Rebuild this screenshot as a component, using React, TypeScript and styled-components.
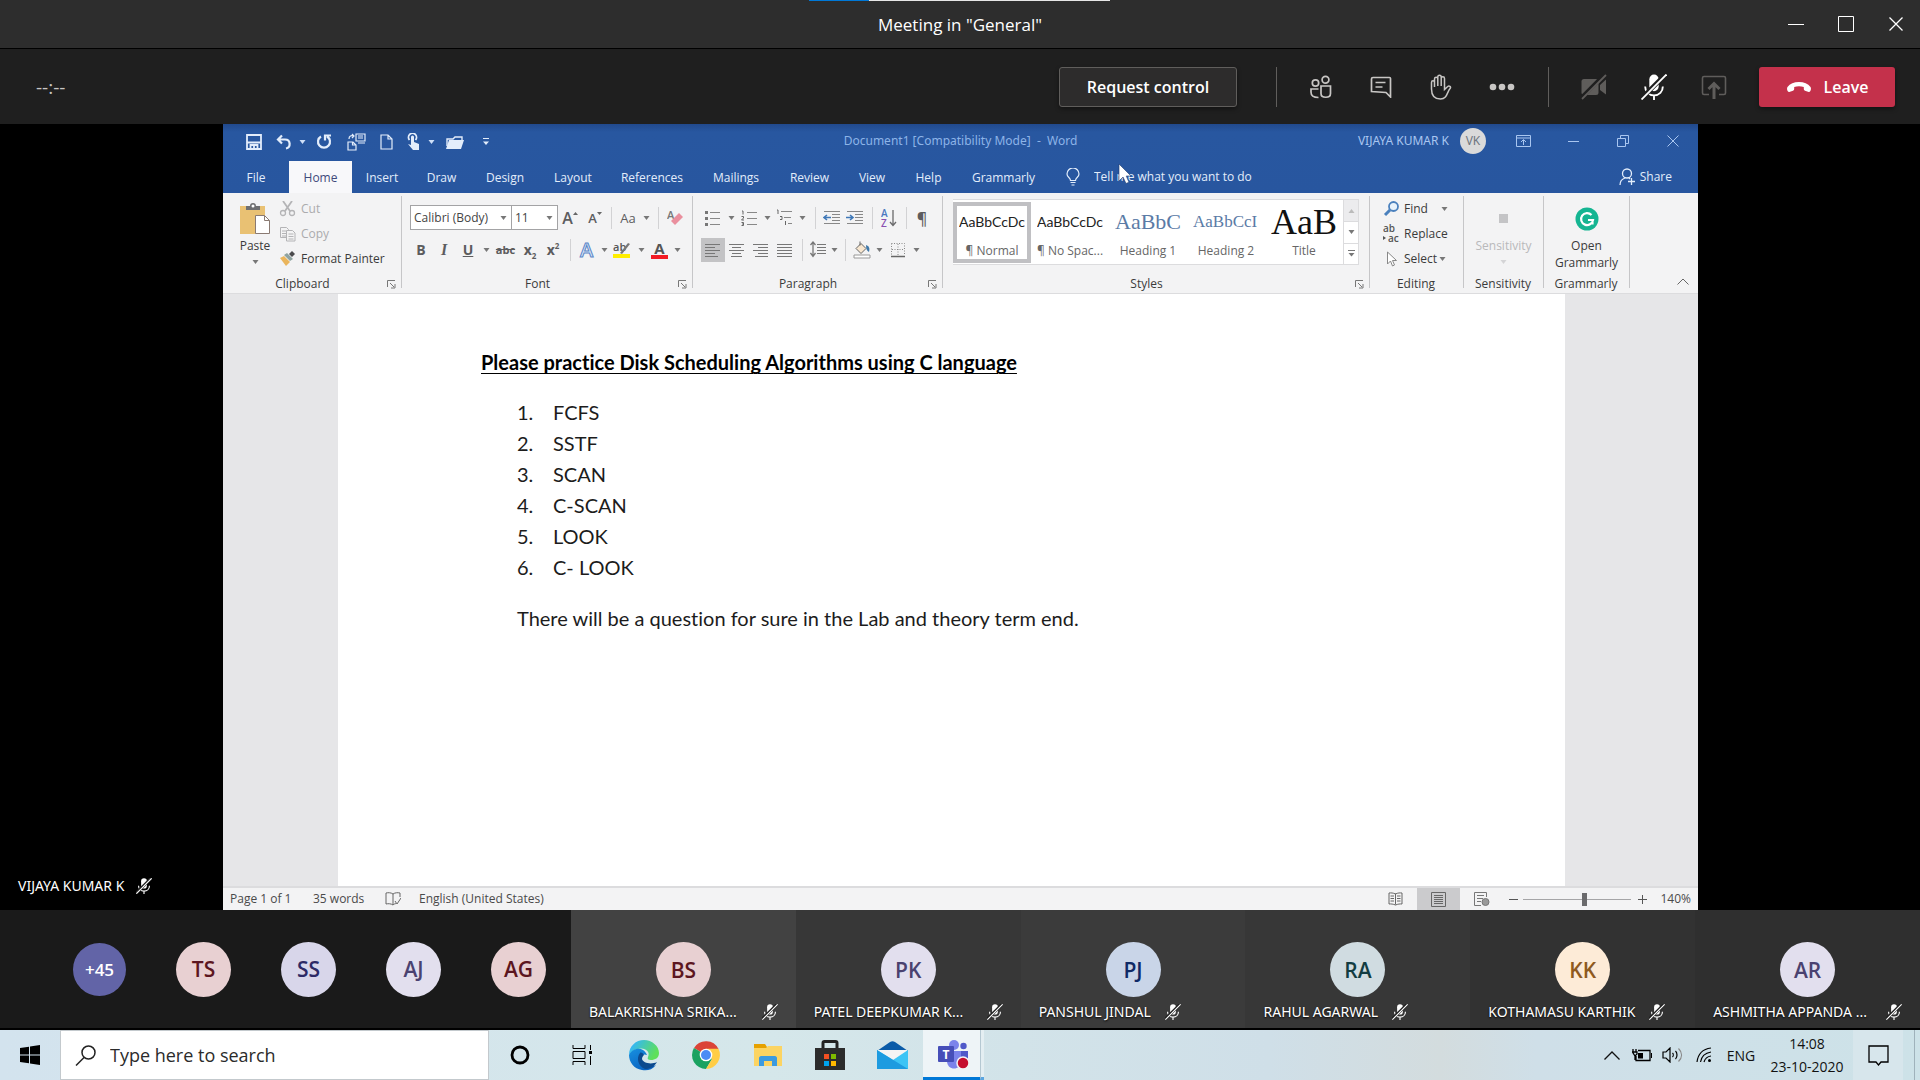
import React from "react";
import styled, { createGlobalStyle, css } from "styled-components";

const ui = `"Open Sans", "Noto Sans", sans-serif`;
const wideUi = `"Noto Sans", "Open Sans", sans-serif`;
const calibri = `Lato, "Open Sans", sans-serif`;
const cambria = `"Liberation Serif", serif`;

const GlobalStyle = createGlobalStyle`
  * { box-sizing: border-box; }
  body { margin: 0; background: #000; font-family: ${ui}; }
  button, input, select { font: inherit; color: inherit; margin: 0; padding: 0; border: 0; background: none; }
  svg { display: block; flex: none; }
`;

const Screen = styled.div`
  display: flex;
  flex-direction: column;
  min-height: 100vh;
`;

/* ---------- meeting window ---------- */

const TitleBar = styled.header`
  display: grid;
  grid-template-columns: 1fr auto 1fr;
  align-items: center;
  height: 49px;
  padding-top: 2px;
  background: #2d2d2d;
  border-bottom: 1px solid #000;
  color: #fff;
  position: relative;
`;

const ShareStrip = styled.div`
  position: absolute;
  top: 0;
  left: 50%;
  width: 301px;
  height: 1px;
  margin-left: -151px;
  background: linear-gradient(to right, #0078d7 60px, #e6e6e6 60px);
`;

const WindowTitle = styled.h1`
  grid-column: 2;
  margin: 0;
  font-size: 17px;
  line-height: 24px;
  font-weight: 400;
`;

const WindowButtons = styled.div`
  display: flex;
  justify-content: flex-end;
  gap: 26px;
  padding: 0 12px 2px 0;
`;

const PlainButton = styled.button<{ $w?: number }>`
  display: flex;
  align-items: center;
  justify-content: center;
  width: ${(p) => p.$w ?? 24}px;
  height: 24px;
`;

const MeetingBar = styled.div`
  display: flex;
  align-items: center;
  height: 75px;
  padding: 0 25px 0 36px;
  background: #1f1f1f;
  color: #c8c6c4;
`;

const Timer = styled.span`
  font-size: 19px;
  line-height: 20px;
  margin-right: auto;
`;

const RequestButton = styled.button`
  width: 178px;
  height: 40px;
  border: 1px solid #605e5c;
  border-radius: 3px;
  background: #2d2c2c;
  color: #fff;
  font-size: 16px;
  font-weight: 600;
  box-shadow: 0 2px 4px rgba(0, 0, 0, 0.4);
`;

const BarGroup = styled.div<{ $gap: number }>`
  display: flex;
  align-items: center;
  height: 40px;
  gap: ${(p) => p.$gap}px;
`;

const BarDivider = styled.div<{ $left: number; $right: number }>`
  width: 1px;
  height: 40px;
  margin: 0 ${(p) => p.$right}px 0 ${(p) => p.$left}px;
  background: #605e5c;
`;

const LeaveButton = styled.button`
  display: flex;
  align-items: center;
  justify-content: center;
  gap: 12px;
  width: 136px;
  height: 40px;
  margin-left: 32px;
  border-radius: 3px;
  background: #c4314b;
  color: #fff;
  font-size: 16px;
  font-weight: 600;
  box-shadow: 0 2px 4px rgba(0, 0, 0, 0.4);
`;

const Stage = styled.main`
  flex: 1;
  display: grid;
  grid-template-columns: 223px minmax(0, 1fr) 222px;
  background: #000;
`;

const Presenter = styled.div`
  align-self: end;
  display: flex;
  align-items: center;
  gap: 12px;
  padding: 0 0 14px 18px;
  color: #fff;
  font-family: ${wideUi};
  font-size: 14px;
  line-height: 20px;
  white-space: nowrap;
`;

/* ---------- shared Word window ---------- */

const Word = styled.section`
  display: flex;
  flex-direction: column;
  min-width: 0;
  background: #e6e6e8;
  position: relative;
`;

const WordTop = styled.div`
  background: linear-gradient(#21498c, #2857a0 8px, #28569f);
  color: #e3edfb;
`;

const WordTitleRow = styled.div`
  display: grid;
  grid-template-columns: 1fr auto 1fr;
  align-items: center;
  height: 36px;
`;

const QuickAccess = styled.div`
  display: flex;
  align-items: center;
  padding-left: 15px;
`;

const DocTitle = styled.span`
  font-family: ${wideUi};
  font-size: 12px;
  line-height: 16px;
  padding-bottom: 2px;
  color: #8db4e8;
  white-space: pre;
`;

const Account = styled.div`
  display: flex;
  align-items: center;
  justify-content: flex-end;
  padding: 0 13px 2px 0;
  font-family: ${wideUi};
  font-size: 12px;
  line-height: 16px;
  color: #a9c6f0;
`;

const AccountBadge = styled.span`
  display: flex;
  align-items: center;
  justify-content: center;
  width: 26px;
  height: 26px;
  margin: 0 25px 0 11px;
  border-radius: 50%;
  background: #dadada;
  color: #6f7680;
  font-size: 12px;
`;

const AccountButtons = styled.div`
  display: flex;
  gap: 26px;
`;

const TabRow = styled.nav`
  display: flex;
  align-items: center;
  height: 33px;
  padding-right: 26px;
  font-size: 12px;
`;

const Tab = styled.button<{ $w: number; $active?: boolean }>`
  width: ${(p) => p.$w}px;
  height: 32px;
  margin-top: 1px;
  text-align: center;
  ${(p) => p.$active && css`
    background: #f8f8fa;
    color: #3f4a7a;
  `}
`;

const TellMe = styled.label`
  display: flex;
  align-items: center;
  gap: 14px;
  flex: 1;
  margin-left: 16px;
`;

const TellMeInput = styled.input`
  width: 190px;
  font-size: 12px;
  outline: 0;
  &::placeholder { color: #e3edfb; opacity: 1; }
`;

const ShareButton = styled.button`
  display: flex;
  align-items: center;
  gap: 4px;
`;

const Ribbon = styled.div`
  display: flex;
  height: 101px;
  padding-top: 3px;
  background: #f3f3f4;
  border-bottom: 1px solid #dcdcde;
  color: #3b3b3b;
  font-size: 12px;
  line-height: 16px;
`;

const Group = styled.section<{ $w?: number }>`
  display: flex;
  flex-direction: column;
  justify-content: space-between;
  ${(p) => (p.$w ? css`flex: 0 0 ${p.$w}px;` : css`flex: 1; min-width: 0;`)}
  background: linear-gradient(#c6c6c8, #c6c6c8) right top / 1px 92px no-repeat;
`;

const GroupBody = styled.div`
  display: flex;
  height: 76px;
`;

const GroupFooter = styled.div`
  display: flex;
  align-items: center;
  height: 18px;
  padding-right: 2px;
  text-align: center;
`;

const GroupName = styled.span`
  flex: 1;
`;

const LauncherButton = styled.button`
  width: 18px;
  padding-left: 5px;
`;

const BigButton = styled.button<{ $w: number; $left?: number; $dim?: boolean }>`
  display: flex;
  flex-direction: column;
  align-items: center;
  width: ${(p) => p.$w}px;
  padding: 5px 0 0 ${(p) => p.$left ?? 0}px;
  line-height: 17px;
  color: ${(p) => (p.$dim ? "#b9b9bb" : "inherit")};
`;

const BigIcon = styled.span`
  display: flex;
  align-items: center;
  justify-content: center;
  height: 36px;
`;

const BigCaret = styled.span`
  padding-top: 6px;
`;

const CommandList = styled.div`
  display: flex;
  flex-direction: column;
  align-items: flex-start;
`;

const Command = styled.button<{ $dim?: boolean }>`
  display: flex;
  align-items: center;
  gap: 5px;
  height: 25px;
  color: ${(p) => (p.$dim ? "#ababad" : "inherit")};
  white-space: nowrap;
`;

const ToolRows = styled.div`
  display: flex;
  flex-direction: column;
  gap: 5px;
  padding: 8px 0 0 8px;
`;

const ToolRow = styled.div`
  display: flex;
  align-items: center;
  height: 27px;
`;

const Tool = styled.button<{ $w: number; $on?: boolean }>`
  display: flex;
  align-items: center;
  justify-content: center;
  width: ${(p) => p.$w}px;
  height: 24px;
  color: #5c5c5e;
  font-size: 13px;
  background: ${(p) => (p.$on ? "#c3c3c5" : "none")};
`;

const Sep = styled.div<{ $w: number }>`
  width: ${(p) => p.$w}px;
  height: 22px;
  background: linear-gradient(#d2d2d4, #d2d2d4) center / 1px 100% no-repeat;
`;

const Bold = styled.b`font-size: 14px;`;
const Italic = styled.i`font-family: "Liberation Serif", serif; font-size: 16px; font-weight: 700;`;
const Underline = styled.u`font-size: 14px; font-weight: 700;`;
const Strike = styled.s`font-size: 11px; font-weight: 700;`;
const Script = styled.span`
  font-weight: 700;
  font-size: 14px;
  line-height: 16px;
  sub, sup { font-size: 8px; line-height: 0; }
`;
const Grow = styled.span<{ $s: number }>`
  font-size: ${(p) => p.$s}px;
  font-weight: 600;
  line-height: 20px;
`;

const Picker = styled.label<{ $w: number }>`
  display: grid;
  align-items: center;
  width: ${(p) => p.$w}px;
  height: 25px;
  margin-right: -1px;
  border: 1px solid #a3a3a5;
  background: #fff;
  > * { grid-area: 1 / 1; }
  > svg { justify-self: end; margin-right: 4px; pointer-events: none; }
`;

const PickerSelect = styled.select`
  appearance: none;
  width: 100%;
  height: 23px;
  padding-left: 3px;
  font-size: 12px;
  color: #444;
`;

const Gallery = styled.div`
  display: flex;
  flex: 1;
  min-width: 0;
  height: 66px;
  margin: 3px 11px 0 10px;
  border: solid #dcdcde;
  border-width: 1px 0;
  background: #fff;
`;

const StyleCard = styled.button<{ $on?: boolean }>`
  display: flex;
  flex-direction: column;
  align-items: center;
  justify-content: flex-end;
  flex: 1 1 0;
  min-width: 0;
  height: 61px;
  margin-top: 2px;
  padding: 0 2px;
  border: 4px solid ${(p) => (p.$on ? "#c0c0c3" : "transparent")};
  color: #666;
`;

const Sample = styled.span<{ $size: number; $color: string; $serif: boolean }>`
  display: block;
  width: 100%;
  height: 37px;
  overflow: hidden;
  font-family: ${(p) => (p.$serif ? cambria : calibri)};
  font-size: ${(p) => p.$size}px;
  line-height: 32px;
  text-align: left;
  color: ${(p) => p.$color};
  white-space: nowrap;
`;

const StyleLabel = styled.span`
  line-height: 16px;
  white-space: nowrap;
`;

const GalleryScroll = styled.div`
  display: grid;
  grid-template-rows: 1fr 1fr 1fr;
  flex: none;
  width: 16px;
  border: 1px solid #dcdcde;
  border-width: 0 1px;
  button { display: grid; place-items: center; }
  button + button { border-top: 1px solid #dcdcde; }
  button:first-child { background: #ececee; }
`;

const CollapseCell = styled.div`
  display: flex;
  align-items: flex-end;
  justify-content: flex-end;
  width: 68px;
  padding-right: 3px;
`;

const Canvas = styled.div`
  flex: 1;
  padding: 0 133px 0 115px;
`;

const Page = styled.article`
  height: 100%;
  padding: 53px 143px 0;
  background: #fff;
  color: #1c1c1c;
  font-family: ${calibri};
  font-size: 20px;
  line-height: 31px;
  font-variant-ligatures: none;
`;

const DocHeading = styled.h2`
  margin: 0 0 19px;
  font-size: 20px;
  line-height: 31px;
  font-weight: 700;
  text-decoration: underline;
  text-decoration-thickness: 1px;
  text-underline-offset: 3px;
  color: #000;
`;

const DocList = styled.ol`
  margin: 0 0 20px;
  padding: 0 0 0 36px;
  list-style: none;
`;

const DocItem = styled.li`
  display: grid;
  grid-template-columns: 36px 1fr;
`;

const DocText = styled.p`
  margin: 0 0 0 36px;
`;

const StatusBar = styled.footer`
  display: flex;
  align-items: center;
  height: 24px;
  padding: 0 7px;
  border-top: 2px solid #dcdcde;
  background: #f3f3f4;
  color: #4a4a4a;
  font-size: 12px;
  line-height: 16px;
`;

const StatusText = styled.span<{ $w: number }>`
  width: ${(p) => p.$w}px;
  white-space: nowrap;
`;

const StatusSpacer = styled.div`flex: 1;`;

const ViewButton = styled.button<{ $on?: boolean }>`
  display: grid;
  place-items: center;
  width: 43px;
  height: 22px;
  background: ${(p) => (p.$on ? "#cbcbcd" : "none")};
`;

const ZoomSlider = styled.input`
  appearance: none;
  width: 108px;
  height: 14px;
  background: linear-gradient(#a5a5a7, #a5a5a7) center / 100% 1px no-repeat;
  &::-webkit-slider-thumb {
    appearance: none;
    width: 5px;
    height: 13px;
    background: #6a6a6c;
  }
`;

const ZoomValue = styled.span`
  margin-left: 7px;
`;

const Pointer = styled.svg`
  position: absolute;
  left: 895px;
  top: 39px;
`;

/* ---------- participants ---------- */

const Strip = styled.section`
  display: grid;
  grid-template-columns: 571px repeat(6, minmax(0, 1fr));
  height: 120px;
  border-bottom: 2px solid #000;
  background: #1a1a1a;
`;

const Overflow = styled.div`
  display: flex;
  align-items: center;
  gap: 50px;
  padding-left: 73px;
`;

const Avatar = styled.span<{ $bg: string; $fg: string; $small?: boolean }>`
  display: flex;
  align-items: center;
  justify-content: center;
  width: ${(p) => (p.$small ? 53 : 55)}px;
  height: ${(p) => (p.$small ? 53 : 55)}px;
  border-radius: 50%;
  background: ${(p) => p.$bg};
  color: ${(p) => p.$fg};
  font-size: ${(p) => (p.$small ? 17 : 21)}px;
  font-weight: 600;
`;

const Tile = styled.div<{ $bg: string }>`
  display: flex;
  flex-direction: column;
  align-items: center;
  padding: 32px 18px 0;
  background: ${(p) => p.$bg};
`;

const TileName = styled.div<{ $long?: boolean }>`
  display: flex;
  align-items: center;
  justify-content: ${(p) => (p.$long ? "space-between" : "flex-start")};
  gap: 14px;
  width: 100%;
  margin-top: 5px;
  color: #fff;
  font-family: ${wideUi};
  font-size: 14px;
  line-height: 20px;
  white-space: nowrap;
  text-shadow: 0 1px 2px #000;
`;

/* ---------- taskbar ---------- */

const Taskbar = styled.footer`
  display: flex;
  align-items: stretch;
  height: 50px;
  background: linear-gradient(to right, #d3e3ee, #d5e7ea 40%, #cfdfe8 66%, #d3dcde 75%, #cfdfe8 80%, #cde2e8);
  color: #111;
`;

const StartButton = styled.button`
  display: grid;
  place-items: center;
  width: 60px;
`;

const SearchBox = styled.label`
  display: flex;
  align-items: center;
  gap: 14px;
  width: 429px;
  padding-left: 14px;
  border: 1px solid #c3c9cd;
  background: #fff;
`;

const SearchInput = styled.input`
  flex: 1;
  font-size: 18px;
  outline: 0;
  &::placeholder { color: #2b2b2b; opacity: 1; }
`;

const TaskButton = styled.button<{ $on?: boolean }>`
  display: grid;
  place-items: center;
  width: ${(p) => (p.$on ? 57 : 62)}px;
  ${(p) => p.$on && css`
    background: #eef4f7;
    border-bottom: 3px solid #0078d7;
    padding: 3px 0 0 4px;
  `}
`;

const StackEdge = styled.div`
  width: 4px;
  border-left: 1px solid #b5c8d2;
  border-bottom: 3px solid #5ba5e0;
  background: #e4eef2;
`;

const Tray = styled.div`
  display: flex;
  align-items: center;
  margin-left: auto;
  font-size: 14px;
`;

const TrayButton = styled.button<{ $w: number }>`
  display: grid;
  place-items: center;
  width: ${(p) => p.$w}px;
  height: 50px;
`;

const Clock = styled.time`
  display: flex;
  flex-direction: column;
  align-items: center;
  width: 92px;
  line-height: 23px;
`;

const NoticeButton = styled.button`
  display: grid;
  place-items: center;
  width: 50px;
  height: 50px;
  background: #d7e6ec;
`;

const ShowDesktop = styled.button`
  width: 6px;
  height: 50px;
  margin-left: 11px;
  border-left: 1px solid #9fb2bb;
`;

/* ---------- drawings ---------- */

type IconProps = { w: number; h: number; box?: string; color?: string; sw?: number; fill?: string; children: React.ReactNode };

const Icon = ({ w, h, box, color = "currentColor", sw = 1, fill = "none", children }: IconProps) => (
  <svg width={w} height={h} viewBox={box ?? `0 0 ${w} ${h}`} fill={fill} stroke={color} strokeWidth={sw} aria-hidden="true">
    {children}
  </svg>
);

const Caret = ({ color = "#777" }: { color?: string }) => (
  <Icon w={7} h={4} color="none" fill={color}><path d="M0.5 0h6L3.5 4z" /></Icon>
);

const MutedMic = ({ s = 16, color = "#fff" }: { s?: number; color?: string }) => (
  <Icon w={s} h={s} box="0 0 25 25" color={color} sw={1.8}>
    <path d="M12.500 0.500a4.500 4.500 0 0 1 4.500 4.500v7a4.500 4.500 0 0 1-9 0V5a4.500 4.500 0 0 1 4.500-4.500z" fill={color} stroke="none" />
    <path d="M4 12c0 5 3.500 8.500 8.500 8.500S21 17 21 12M12.500 20.500V25" />
    <path d="M24 0 0 24" stroke="#1f1f1f" strokeWidth="4.500" />
    <path d="M24.500 0.500 0.500 24.500" />
  </Icon>
);

const Launcher = () => (
  <Icon w={9} h={9} color="#777"><path d="M0.500 7V0.500H8M3 3l4 4M8 4v4H4" /></Icon>
);

const lines = (rows: [number, number, number][]) => (
  <Icon w={16} h={16} color="#777">
    {rows.map(([x1, x2, y]) => <path key={y} d={`M${x1} ${y + 0.5}H${x2}`} />)}
  </Icon>
);

const alignLeft = lines([[0, 15, 2], [0, 10, 5], [0, 15, 8], [0, 10, 11], [0, 13, 14]]);
const alignCenter = lines([[0, 15, 2], [3, 12, 5], [0, 15, 8], [3, 12, 11], [2, 13, 14]]);
const alignRight = lines([[0, 15, 2], [5, 15, 5], [0, 15, 8], [5, 15, 11], [2, 15, 14]]);
const justify = lines([[0, 15, 2], [0, 15, 5], [0, 15, 8], [0, 15, 11], [0, 15, 14]]);

const Bullets = () => (
  <Icon w={16} h={16} color="#888">
    <path d="M5 2.500h10M5 8.500h10M5 14.500h10" />
    <path d="M0 2.500h3M0 8.500h3M0 14.500h3" strokeWidth="3" stroke="#777" />
  </Icon>
);
const Numbers = () => (
  <Icon w={16} h={16} color="#888">
    <path d="M6 2.500h10M6 8.500h10M6 14.500h10" />
    <path d="M1 1h1v3.500M0.500 6.500h2v1.500l-2 2h2.500M0.500 12.500h2v3h-2M1 14h1" stroke="#666" />
  </Icon>
);
const Multilevel = () => (
  <Icon w={18} h={17} color="#888">
    <path d="M5 2.500h11M8 8.500h7M12 14.500h4" />
    <path d="M1 1h1v4M4 7.500h2v3h-2M9.500 12v4" stroke="#666" />
  </Icon>
);
const Indent = ({ right }: { right?: boolean }) => (
  <Icon w={18} h={16} color="#888">
    <path d="M1 1.500h16M9 4.500h8M9 7.500h8M9 10.500h8M1 13.500h16" />
    <path d={right ? "M0 7.500h6M4 5l3 2.500L4 10" : "M8 7.500H2M4 5 1 7.500 4 10"} stroke="#3f78b8" strokeWidth="1.600" />
  </Icon>
);
const SortIcon = () => (
  <Icon w={16} h={20} color="#6a6a6c">
    <text x="0" y="9" fontSize="10" fontWeight="600" fill="#4a78c0" stroke="none">A</text>
    <text x="0" y="19" fontSize="10" fontWeight="600" fill="#8a4fb0" stroke="none">Z</text>
    <path d="M12 2v15M9 14l3 3.500 3-3.500" strokeWidth="1.300" />
  </Icon>
);
const Spacing = () => (
  <Icon w={17} h={17} color="#777">
    <path d="M7 3.500h9M7 6.500h9M7 9.500h9M7 12.500h9" />
    <path d="M3 1v14M0.500 4 3 1l2.500 3M0.500 12 3 15.500 5.500 12" strokeWidth="1.300" />
  </Icon>
);
const Bucket = () => (
  <Icon w={18} h={18} color="#666">
    <path d="M3 7.500 8 2.500l5 5-5 5zM7 0.500v4" fill="#f7e6cf" />
    <path d="M13 4c3 1 4 3 3 7-2-1-3-3-3-7z" fill="#3f78a8" stroke="none" />
    <path d="M1 14h16v3H1z" fill="#fff" stroke="#999" />
  </Icon>
);
const Borders = () => (
  <Icon w={16} h={16} color="#888">
    <path d="M1.500 1.500h13v12M1.500 1.500v12M8 2v11M2 7.500h12" strokeDasharray="1 1.500" />
    <path d="M1 14.500h14" strokeWidth="1.500" stroke="#666" />
  </Icon>
);

const Paste = () => (
  <Icon w={32} h={34} color="none">
    <path d="M1 4h25v28H1z" fill="#e9c173" />
    <path d="M7 8V4h4a3 3 0 0 1 6 0h4v4z" fill="#6e6e70" />
    <circle cx="14" cy="4" r="1.500" fill="#fff" />
    <path d="M16.500 13.500h9l5 5v13h-14z" fill="#fff" stroke="#8a7a72" />
    <path d="M25.500 13.500v5h5" stroke="#8a7a72" />
  </Icon>
);
const Cut = () => (
  <Icon w={17} h={16} color="#b4b4b6" sw={1.8}>
    <path d="M4 0l7 10M13 0 6 10" /><circle cx="4" cy="12" r="2.500" strokeWidth="1.300" /><circle cx="13" cy="12" r="2.500" strokeWidth="1.300" />
  </Icon>
);
const Copy = () => (
  <Icon w={17} h={16} color="#b4b4b6">
    <path d="M1.500 1.500h6l2 2v8h-8zM3 5h4M3 7.500h4M3 10h4" />
    <path d="M7.500 4.500h6l2.500 2.500v8H7.500zM9.500 8h5M9.500 10.500h5M9.500 13h5" fill="#f3f3f4" />
  </Icon>
);
const Painter = () => (
  <Icon w={17} h={16} color="none">
    <path d="M1 7l4-2 6 6-4 4z" fill="#eab55c" /><path d="M5 4l3-2 6 6-3 2z" fill="#8fa3a0" /><path d="M10 3l3-3 3 3-3 3z" fill="#4b4b4d" />
  </Icon>
);

const SaveIcon = () => (
  <Icon w={16} h={16} sw={1.8}><path d="M1 1h14v14H1zM1.500 8.500h13M4.500 15v-4h7v4M8 11v4" /></Icon>
);
const Undo = () => <Icon w={16} h={16} sw={2.2}><path d="M6 1.500 2 5.500l4 4M2 5.500h7c6 0 6 8 1 9" /></Icon>;
const Redo = () => <Icon w={16} h={16} sw={2.2}><path d="M5 2.500a6 6 0 1 0 6 0M9 6.500V1.500h6" /></Icon>;
const PageSwap = () => (
  <Icon w={19} h={18} sw={1.2}><path d="M1 9h5l3 3v5H1zM5.500 9v3H9M9 1h9v7H9zM11 3h5M11 5h5M2 6c0-3 2-4 5-3M5 1l2 2-2 2M11 10h7" /></Icon>
);
const NewPage = () => <Icon w={13} h={16} sw={1.2}><path d="M1 1h7l4 4v10H1zM8 1v4h4" /></Icon>;
const Touch = () => (
  <Icon w={14} h={18} color="none" fill="currentColor">
    <path d="M4 4a1.500 1.500 0 0 1 3 0v5l5 2v6H6L1 11l3 1z" /><path d="M2.500 7a4 4 0 1 1 6 0" fill="none" stroke="currentColor" strokeWidth="1.800" />
  </Icon>
);
const Folder = () => (
  <Icon w={19} h={15} color="none" fill="currentColor"><path d="M3 5h15l-3 9H0z" /><path d="M1 11V4h6l2-2h7v3" fill="none" stroke="currentColor" strokeWidth="1.400" /></Icon>
);
const Customize = () => <Icon w={8} h={8}><path d="M1 0.500h6" /><path d="M1 3.500h6L4 7z" fill="currentColor" stroke="none" /></Icon>;

const People = () => (
  <Icon w={22} h={24} sw={1.7}>
    <circle cx="5.500" cy="8" r="3.200" /><circle cx="15.500" cy="4.800" r="3.400" />
    <path d="M11 11h9.500v7.500c0 5-9.500 5-9.500 0zM8.500 14H1v3c0 4 2 5.500 7.500 5.500" />
  </Icon>
);
const Chat = () => (
  <Icon w={22} h={22} sw={1.7}><path d="M3 1.500h16.500c.6 0 1 .4 1 1V21l-4.500-4.500L1.500 15.500V3c0-.8.700-1.500 1.500-1.500zM5.500 6.500h10M5.500 11h7" /></Icon>
);
const Hand = () => (
  <Icon w={22} h={26} sw={1.5}>
    <path d="M1.500 15V8.500c0-2.200 3-2.200 3 0V5c0-2.300 3.300-2.300 3.300 0V3c0-2.300 3.400-2.300 3.400 0v1.500c0-2.300 3.300-2.300 3.300 0V15.500l3.200-3c1.500-1 3.600.3 2.600 1.800C17 17.500 17.500 25 10.500 25S1.500 20 1.500 15zM4.500 8.500V13M7.800 4.500V12M11.200 4V12" />
  </Icon>
);
const CamOff = () => (
  <Icon w={26} h={26} color="#5f5d5b" sw={1.8}>
    <path d="M3 5h12a2.500 2.500 0 0 1 2.500 2.500v11A2.500 2.500 0 0 1 15 21H3a2.500 2.500 0 0 1-2.500-2.500v-11A2.500 2.500 0 0 1 3 5zM19 11l6-5.500v15L19 16z" fill="#5f5d5b" stroke="none" />
    <path d="M24 0 0 24" stroke="#1f1f1f" strokeWidth="4" /><path d="M25 1 1 25" />
  </Icon>
);
const ShareTray = () => (
  <Icon w={26} h={24} color="#5f5d5b" sw={1.6}><path d="M8 19.500H3c-1 0-1.500-.5-1.500-1.500V3c0-1 .5-1.500 1.500-1.500h20c1 0 1.500.500 1.500 1.500v15c0 1-.5 1.500-1.500 1.500h-5" /><path d="M13 24V9M7.500 14 13 8.500l5.500 5.500" strokeWidth="3" /></Icon>
);
const Phone = () => (
  <Icon w={26} h={12} color="none" fill="#fff"><path d="M13 1c5 0 9 1.500 11.500 5 .8 1.200.5 3.500-.5 4.500-.5.5-1 .5-2 .2l-3-1c-1-.4-1.200-1-1.200-2.200V6c-3-1-6.600-1-9.600 0v1.500c0 1.200-.2 1.800-1.200 2.200l-3 1c-1 .3-1.500.3-2-.2-1-1-1.300-3.300-.5-4.500C4 2.500 8 1 13 1z" /></Icon>
);

const Edge = () => (
  <Icon w={32} h={32} color="none">
    <defs>
      <linearGradient id="edgeTop" x1="0" y1="0" x2="1" y2="0.400"><stop offset="0.200" stopColor="#35b8f1" /><stop offset="1" stopColor="#5fe05a" /></linearGradient>
      <linearGradient id="edgeBody" x1="0" y1="0" x2="0.600" y2="1"><stop offset="0" stopColor="#1790e0" /><stop offset="1" stopColor="#0a62c0" /></linearGradient>
    </defs>
    <path d="M1 16C1 7 8 1 16 1s15 6 15 13c0 5-4 7-8 7-3 0-4-1-3-3 3-6-4-10-10-8-5 1-8 4-9 6z" fill="url(#edgeTop)" />
    <path d="M1 16c2-5 9-8 14-5 2 1 3 3 4 5-5-2-8 2-7 6 2 5 9 7 16 4-4 5-9 6-14 5C6 30 1 23 1 16z" fill="url(#edgeBody)" />
    <path d="M12 14c-4 5-2 13 5 16 5 0 9-2 12-7-6 3-14 1-15-3 0-2 1-3 2-4-1-2-3-3-4-2z" fill="#0c4a8e" />
  </Icon>
);
const Chrome = () => (
  <Icon w={28} h={28} color="none">
    <path d="M14 14 2 7a14 14 0 0 1 24.500 1z" fill="#db4437" />
    <path d="M14 14 1.900 7A14 14 0 0 0 14 28l6-10z" fill="#1aa260" />
    <path d="M14 7.800h12.500A14 14 0 0 1 14 28l6-10z" fill="#ffcd46" />
    <circle cx="14" cy="14" r="6.300" fill="#fff" /><circle cx="14" cy="14" r="5" fill="#4c8bf5" />
  </Icon>
);
const Explorer = () => (
  <Icon w={28} h={24} color="none">
    <path d="M0 1h11l2 3v3H0z" fill="#e6a100" /><path d="M0 5h12l2-2h14v20H0z" fill="#fcd462" /><path d="M5 23V15c0-1 1-2 2-2h14c1 0 2 1 2 2v8h-5v-5h-8v5z" fill="#3c9be0" />
  </Icon>
);
const Store = () => (
  <Icon w={30} h={31} color="none">
    <path d="M8 9V3c0-1 .5-1.500 1.500-1.500h11c1 0 1.500.500 1.500 1.500v6" stroke="#222" strokeWidth="3" /><path d="M0 8h30v22H0z" fill="#2c2c2c" />
    <path d="M9 14h5v5H9z" fill="#f25022" /><path d="M16 14h5v5h-5z" fill="#7fba00" /><path d="M9 21h5v5H9z" fill="#00a4ef" /><path d="M16 21h5v5h-5z" fill="#ffb900" />
  </Icon>
);
const Mail = () => (
  <Icon w={31} h={29} color="none">
    <path d="M0 10 13 1q2.500-1.500 5 0l13 9z" fill="#0a5ba8" /><path d="M1 9h29v12H1z" fill="#f4f4f4" /><path d="M0 9l16 10 15-10v19H0z" fill="#3cc4f5" /><path d="M0 9l31 19H0z" fill="#1d9be0" />
  </Icon>
);
const Teams = () => (
  <Icon w={32} h={32} color="none">
    <circle cx="16" cy="6" r="5" fill="#7b83eb" /><circle cx="25.500" cy="7" r="3.200" fill="#5059c9" />
    <path d="M19 12h11v9c0 6-8 7-11 2z" fill="#5059c9" /><path d="M9 12h14v10c0 10-14 10-14 0z" fill="#7b83eb" />
    <rect x="0" y="7" width="16" height="16" rx="1" fill="#464eb8" />
    <text x="8" y="19.500" fontSize="12" fontWeight="700" textAnchor="middle" fill="#fff">T</text>
    <circle cx="25" cy="24" r="6" fill="#c50f2e" stroke="#f3f3f3" strokeWidth="1.500" />
  </Icon>
);

/* ---------- data ---------- */

const tabs: [string, number][] = [
  ["File", 66], ["Home", 63], ["Insert", 60], ["Draw", 59], ["Design", 68], ["Layout", 68], ["References", 90],
  ["Mailings", 78], ["Review", 69], ["View", 56], ["Help", 57], ["Grammarly", 93],
];

const styleCards: { sample: string; label: string; size: number; color: string; serif: boolean }[] = [
  { sample: "AaBbCcDc", label: "¶ Normal", size: 14, color: "#222", serif: false },
  { sample: "AaBbCcDc", label: "¶ No Spac...", size: 14, color: "#222", serif: false },
  { sample: "AaBbC", label: "Heading 1", size: 22, color: "#5b7ba6", serif: true },
  { sample: "AaBbCcI", label: "Heading 2", size: 17, color: "#5b7ba6", serif: true },
  { sample: "AaB", label: "Title", size: 36, color: "#111", serif: true },
];

const algorithms = ["FCFS", "SSTF", "SCAN", "C-SCAN", "LOOK", "C- LOOK"];

const overflow: [string, string, string][] = [
  ["TS", "#e8d0d2", "#5c1620"], ["SS", "#d8d6ea", "#2d2a66"], ["AJ", "#e2dfee", "#4a4270"], ["AG", "#e8d0d2", "#5c1620"],
];

const participants = [
  { id: "BS", name: "BALAKRISHNA SRIKA...", bg: "#424242", av: "#e8d0d2", fg: "#5c1620", long: true },
  { id: "PK", name: "PATEL DEEPKUMAR K...", bg: "#373737", av: "#e2dfee", fg: "#4a4270", long: true },
  { id: "PJ", name: "PANSHUL JINDAL", bg: "#3b3b3b", av: "#c9d5e8", fg: "#0f2a66" },
  { id: "RA", name: "RAHUL AGARWAL", bg: "#373737", av: "#d0dce1", fg: "#123c42" },
  { id: "KK", name: "KOTHAMASU KARTHIK", bg: "#323232", av: "#fdebd7", fg: "#8f5a1e" },
  { id: "AR", name: "ASHMITHA APPANDA ...", bg: "#2f2f2f", av: "#e2dfee", fg: "#4a4270", long: true },
];

const Drop = ({ w, label }: { w: number; label: string }) => <Tool $w={w} aria-label={label}><Caret /></Tool>;

const Footer = ({ name, launcher }: { name: string; launcher?: boolean }) => (
  <GroupFooter><GroupName>{name}</GroupName>{launcher && <LauncherButton aria-label={`${name} settings`}><Launcher /></LauncherButton>}</GroupFooter>
);

const EditGap = styled.span<{ $w: number }>`
  margin-left: ${(p) => p.$w}px;
`;

const EditRow = styled(Command)`
  gap: 0;
  padding-left: 13px;
  svg:first-child { margin-right: 4px; }
`;

function EditCommand({ icon, text, gap }: { icon: React.ReactNode; text: string; gap?: number }) {
  return (
    <EditRow>
      {icon}{text}{gap !== undefined && <EditGap $w={gap}><Caret /></EditGap>}
    </EditRow>
  );
}

const WordWindow = () => (
  <Word>
    <WordTop>
      <WordTitleRow>
        <QuickAccess>
          <PlainButton $w={32} aria-label="Save"><SaveIcon /></PlainButton>
          <PlainButton $w={28} aria-label="Undo"><Undo /></PlainButton>
          <PlainButton $w={8} aria-label="Undo list"><Caret color="#cfe0f8" /></PlainButton>
          <PlainButton $w={36} aria-label="Repeat"><Redo /></PlainButton>
          <PlainButton $w={28} aria-label="Switch page"><PageSwap /></PlainButton>
          <PlainButton $w={32} aria-label="New"><NewPage /></PlainButton>
          <PlainButton $w={24} aria-label="Touch mode"><Touch /></PlainButton>
          <PlainButton $w={10} aria-label="Touch list"><Caret color="#cfe0f8" /></PlainButton>
          <PlainButton $w={38} aria-label="Open"><Folder /></PlainButton>
          <PlainButton aria-label="Customize toolbar"><Customize /></PlainButton>
        </QuickAccess>
        <DocTitle>{"Document1 [Compatibility Mode]  -  Word"}</DocTitle>
        <Account>
          VIJAYA KUMAR K
          <AccountBadge>VK</AccountBadge>
          <AccountButtons>
            <PlainButton aria-label="Ribbon options"><Icon w={15} h={12}><path d="M0.500 0.500h14v11H0.500zM0.500 3h14M7.500 10V5M5 7l2.500-2.500L10 7" /></Icon></PlainButton>
            <PlainButton aria-label="Minimize Word"><Icon w={11} h={12}><path d="M0 6.500h11" /></Icon></PlainButton>
            <PlainButton aria-label="Restore Word"><Icon w={12} h={12}><path d="M0.500 3.500h8v8h-8zM3.500 3V0.500h8v8H9" /></Icon></PlainButton>
            <PlainButton aria-label="Close Word"><Icon w={12} h={12}><path d="m0.500 0.500 11 11M11.500 0.500l-11 11" /></Icon></PlainButton>
          </AccountButtons>
        </Account>
      </WordTitleRow>
      <TabRow>
        {tabs.map(([name, w]) => <Tab key={name} $w={w} $active={name === "Home"}>{name}</Tab>)}
        <TellMe>
          <Icon w={14} h={18} sw={1.2}><path d="M4.500 12.500c0-3-3.500-3-3.500-6.500a6 6 0 0 1 12 0c0 3.500-3.500 3.500-3.500 6.500zM4.500 14.500h5M5.500 17h3" /></Icon>
          <TellMeInput aria-label="Tell me what you want to do" placeholder="Tell me what you want to do" />
        </TellMe>
        <ShareButton>
          <Icon w={17} h={18} sw={1.3}><circle cx="8" cy="5.500" r="4.500" /><path d="M1 17c0-4 2-6 5-7M10 10l1 1M12.500 10v7M9 13.500h7" /></Icon>
          Share
        </ShareButton>
      </TabRow>
    </WordTop>

    <Ribbon>
      <Group $w={179}>
        <GroupBody>
          <BigButton $w={56} $left={8}>
            <BigIcon><Paste /></BigIcon>
            Paste
            <BigCaret><Caret /></BigCaret>
          </BigButton>
          <CommandList>
            <Command $dim><Cut />Cut</Command>
            <Command $dim><Copy />Copy</Command>
            <Command><Painter />Format Painter</Command>
          </CommandList>
        </GroupBody>
        <Footer name="Clipboard" launcher />
      </Group>

      <Group $w={291}>
        <ToolRows>
          <ToolRow>
            <Picker $w={102}><PickerSelect aria-label="Font name"><option>Calibri (Body)</option></PickerSelect><Caret /></Picker>
            <Picker $w={47}><PickerSelect aria-label="Font size"><option>11</option></PickerSelect><Caret /></Picker>
            <Tool $w={26} aria-label="Grow font"><Grow $s={16}>A</Grow><Icon w={5} h={12} color="none" fill="#666"><path d="M0 3 2.500 0 5 3z" /></Icon></Tool>
            <Tool $w={24} aria-label="Shrink font"><Grow $s={13}>A</Grow><Icon w={5} h={12} color="none" fill="#666"><path d="M0 0h5L2.500 3z" /></Icon></Tool>
            <Sep $w={8} />
            <Tool $w={26} aria-label="Change case">Aa</Tool>
            <Drop w={10} label="Case list" />
            <Sep $w={14} />
            <Tool $w={20} aria-label="Clear formatting">
              <Icon w={17} h={17} color="none"><text x="0" y="10" fontSize="11" fontWeight="600" fill="#777">A</text><path d="M4 12l8-8 4 4-8 8z" fill="#ea8f9e" /></Icon>
            </Tool>
          </ToolRow>
          <ToolRow>
            <Tool $w={22} aria-label="Bold"><Bold>B</Bold></Tool>
            <Tool $w={24} aria-label="Italic"><Italic>I</Italic></Tool>
            <Tool $w={24} aria-label="Underline"><Underline>U</Underline></Tool>
            <Drop w={12} label="Underline list" />
            <Tool $w={27} aria-label="Strikethrough"><Strike>abc</Strike></Tool>
            <Tool $w={22} aria-label="Subscript"><Script>x<sub>2</sub></Script></Tool>
            <Tool $w={24} aria-label="Superscript"><Script>x<sup>2</sup></Script></Tool>
            <Sep $w={10} />
            <Tool $w={24} aria-label="Text effects"><Icon w={16} h={18} sw={1} color="#5b86c8"><text x="1" y="16" fontSize="20" fontWeight="600" fill="#dce8f8">A</text></Icon></Tool>
            <Drop w={10} label="Effects list" />
            <Tool $w={26} aria-label="Highlight"><Icon w={18} h={18} color="none"><text x="0" y="10" fontSize="11" fontWeight="600" fill="#555">ab</text><path d="M7 12 15 2l2 1-8 10z" fill="#777" /><path d="M0 13h17v4H0z" fill="#ffee00" /></Icon></Tool>
            <Drop w={12} label="Highlight list" />
            <Tool $w={24} aria-label="Font color"><Icon w={17} h={18} color="none"><text x="8.500" y="13" textAnchor="middle" fontSize="15" fontWeight="700" fill="#555">A</text><path d="M0 14h17v4H0z" fill="#f31b24" /></Icon></Tool>
            <Drop w={12} label="Color list" />
          </ToolRow>
        </ToolRows>
        <Footer name="Font" launcher />
      </Group>

      <Group $w={250}>
        <ToolRows>
          <ToolRow>
            <Tool $w={24} aria-label="Bullets"><Bullets /></Tool>
            <Drop w={12} label="Bullets list" />
            <Tool $w={24} aria-label="Numbering"><Numbers /></Tool>
            <Drop w={13} label="Numbering list" />
            <Tool $w={22} aria-label="Multilevel list"><Multilevel /></Tool>
            <Drop w={13} label="Multilevel options" />
            <Sep $w={12} />
            <Tool $w={22} aria-label="Decrease indent"><Indent /></Tool>
            <Tool $w={24} aria-label="Increase indent"><Indent right /></Tool>
            <Sep $w={10} />
            <Tool $w={24} aria-label="Sort"><SortIcon /></Tool>
            <Sep $w={10} />
            <Tool $w={22} aria-label="Show marks"><Grow $s={16}>¶</Grow></Tool>
          </ToolRow>
          <ToolRow>
            <Tool $w={24} $on aria-label="Align left">{alignLeft}</Tool>
            <Tool $w={24} aria-label="Center">{alignCenter}</Tool>
            <Tool $w={24} aria-label="Align right">{alignRight}</Tool>
            <Tool $w={24} aria-label="Justify">{justify}</Tool>
            <Sep $w={10} />
            <Tool $w={22} aria-label="Line spacing"><Spacing /></Tool>
            <Drop w={10} label="Spacing list" />
            <Sep $w={12} />
            <Tool $w={22} aria-label="Shading"><Bucket /></Tool>
            <Drop w={13} label="Shading list" />
            <Tool $w={24} aria-label="Borders"><Borders /></Tool>
            <Drop w={13} label="Borders list" />
          </ToolRow>
        </ToolRows>
        <Footer name="Paragraph" launcher />
      </Group>

      <Group>
        <GroupBody>
          <Gallery>
            {styleCards.map((card, i) => (
              <StyleCard key={card.label} $on={i === 0}>
                <Sample $size={card.size} $color={card.color} $serif={card.serif}>{card.sample}</Sample>
                <StyleLabel>{card.label}</StyleLabel>
              </StyleCard>
            ))}
            <GalleryScroll>
              <button aria-label="Previous styles"><Icon w={7} h={4} color="none" fill="#bbb"><path d="M0.500 4h6L3.500 0z" /></Icon></button>
              <button aria-label="Next styles"><Caret /></button>
              <button aria-label="More styles"><Icon w={7} h={7} color="#777"><path d="M0 0.500h7" /><path d="M0.500 3h6L3.500 6.500z" fill="#777" stroke="none" /></Icon></button>
            </GalleryScroll>
          </Gallery>
        </GroupBody>
        <Footer name="Styles" launcher />
      </Group>

      <Group $w={94}>
        <GroupBody>
          <CommandList>
            <EditCommand icon={<Icon w={17} h={16} color="#4a80bd" sw={1.800}><circle cx="10.500" cy="5.500" r="4.500" fill="#e8f2fb" /><path d="M7 9 2 14" strokeWidth="3" /></Icon>} text="Find" gap={13} />
            <EditCommand icon={<Icon w={17} h={19} color="none" fill="#555"><text x="0" y="8" fontSize="10" fontWeight="600">ab</text><text x="5" y="18" fontSize="10" fontWeight="600">ac</text><path d="M0 12l3 2-3 2z" /></Icon>} text="Replace" />
            <EditCommand icon={<Icon w={17} h={16} color="#888"><path d="M4.500 1v12l3-3 2 5 2-1-2-4.500h4z" fill="#fff" /></Icon>} text="Select" gap={2} />
          </CommandList>
        </GroupBody>
        <Footer name="Editing" />
      </Group>

      <Group $w={80}>
        <GroupBody>
          <BigButton $w={79} $dim>
            <BigIcon><Icon w={12} h={12} color="none" fill="#c4c4c6"><path d="M1 1h9v9H1z" /></Icon></BigIcon>
            Sensitivity
            <BigCaret><Caret color="#d4d4d6" /></BigCaret>
          </BigButton>
        </GroupBody>
        <Footer name="Sensitivity" />
      </Group>

      <Group $w={86}>
        <GroupBody>
          <BigButton $w={85}>
            <BigIcon><Icon w={24} h={24} color="#fff" sw={2.200}><circle cx="12" cy="12" r="11.500" fill="#15b592" stroke="none" /><path d="M16.500 8a6 6 0 1 0 1.500 5h-5M17.500 12.500v5" /></Icon></BigIcon>
            <span>Open<br />Grammarly</span>
          </BigButton>
        </GroupBody>
        <Footer name="Grammarly" />
      </Group>

      <CollapseCell>
        <PlainButton aria-label="Collapse ribbon"><Icon w={12} h={7} color="#666"><path d="M0.500 6.500 6 1l5.500 5.500" /></Icon></PlainButton>
      </CollapseCell>
    </Ribbon>

    <Canvas>
      <Page>
        <DocHeading>Please practice Disk Scheduling Algorithms using C language</DocHeading>
        <DocList>
          {algorithms.map((name, i) => <DocItem key={name}><span>{i + 1}.</span><span>{name}</span></DocItem>)}
        </DocList>
        <DocText>There will be a question for sure in the Lab and theory term end.</DocText>
      </Page>
    </Canvas>

    <StatusBar>
      <StatusText $w={83}>Page 1 of 1</StatusText>
      <StatusText $w={72}>35 words</StatusText>
      <StatusText $w={34}>
        <Icon w={16} h={16} color="#666"><path d="M8 3v11M8 3C6 1.500 3 1.500 1 2v11c2-.5 5-.5 7 1 1-1 2-1.300 3-1.400M8 3c2-1.500 5-1.500 7-1v4M10 10l2 3 4-6" /></Icon>
      </StatusText>
      <StatusText $w={130}>English (United States)</StatusText>
      <StatusSpacer />
      <ViewButton aria-label="Read mode"><Icon w={15} h={14} color="#666"><path d="M7.500 1.500v11M7.500 2C5 .8 3 .8 1 1v11c2-.2 4 0 6.500 1 2.500-1 4.500-1.200 6.500-1V1c-2-.2-4-.2-6.500 1zM2.500 4H6M2.500 6.500H6M2.500 9H6M9 4h3.500M9 6.500h3.500M9 9h3.500" /></Icon></ViewButton>
      <ViewButton $on aria-label="Print layout"><Icon w={15} h={15} color="#666"><path d="M0.500 0.500h14v14H0.500zM3 3.500h9M3 5.500h9M3 7.500h9M3 9.500h9M3 11.500h9" /></Icon></ViewButton>
      <ViewButton aria-label="Web layout"><Icon w={16} h={15} color="#777"><path d="M12.500 5V0.500H0.500v13H7M3 3.500h7M3 6.500h6M3 9.500h4" /><circle cx="11.500" cy="10" r="3.500" fill="#999" /></Icon></ViewButton>
      <PlainButton $w={20} aria-label="Zoom out"><Icon w={9} h={9} color="#555"><path d="M0 4.500h9" /></Icon></PlainButton>
      <ZoomSlider type="range" aria-label="Zoom" min={0} max={100} defaultValue={57} />
      <PlainButton $w={22} aria-label="Zoom in"><Icon w={9} h={9} color="#555"><path d="M0 4.500h9M4.500 0v9" /></Icon></PlainButton>
      <ZoomValue>140%</ZoomValue>
    </StatusBar>

    <Pointer width="14" height="22" viewBox="0 0 14 22"><path d="M1 1v17l4-4 3 6.500 3-1.300L8.200 13H13z" fill="#fff" stroke="#1c3a70" strokeWidth="0.600" /></Pointer>
  </Word>
);

export default function App() {
  return (
    <Screen>
      <GlobalStyle />
      <TitleBar>
        <ShareStrip />
        <WindowTitle>Meeting in "General"</WindowTitle>
        <WindowButtons>
          <PlainButton aria-label="Minimize"><Icon w={16} h={16}><path d="M0 8.500h16" /></Icon></PlainButton>
          <PlainButton aria-label="Maximize"><Icon w={16} h={16}><path d="M0.500 0.500h15v15H0.500z" /></Icon></PlainButton>
          <PlainButton aria-label="Close"><Icon w={14} h={14} sw={1.300}><path d="m0.500 0.500 13 13M13.500 0.500l-13 13" /></Icon></PlainButton>
        </WindowButtons>
      </TitleBar>

      <MeetingBar>
        <Timer>--:--</Timer>
        <RequestButton>Request control</RequestButton>
        <BarDivider $left={39} $right={32} />
        <BarGroup $gap={36}>
          <PlainButton aria-label="Participants"><People /></PlainButton>
          <PlainButton aria-label="Chat"><Chat /></PlainButton>
          <PlainButton aria-label="Raise hand"><Hand /></PlainButton>
          <PlainButton $w={26} aria-label="More"><Icon w={26} h={8} color="none" fill="currentColor"><circle cx="4" cy="4" r="3.300" /><circle cx="13" cy="4" r="3.300" /><circle cx="22" cy="4" r="3.300" /></Icon></PlainButton>
        </BarGroup>
        <BarDivider $left={33} $right={32} />
        <BarGroup $gap={34}>
          <PlainButton $w={26} aria-label="Camera off"><CamOff /></PlainButton>
          <PlainButton $w={26} aria-label="Unmute"><MutedMic s={26} /></PlainButton>
          <PlainButton $w={26} aria-label="Share"><ShareTray /></PlainButton>
        </BarGroup>
        <LeaveButton><Phone />Leave</LeaveButton>
      </MeetingBar>

      <Stage>
        <Presenter>VIJAYA KUMAR K <MutedMic /></Presenter>
        <WordWindow />
      </Stage>

      <Strip>
        <Overflow>
          <Avatar $small $bg="#6264a7" $fg="#fff">+45</Avatar>
          {overflow.map(([id, bg, fg]) => <Avatar key={id} $bg={bg} $fg={fg}>{id}</Avatar>)}
        </Overflow>
        {participants.map((p) => (
          <Tile key={p.id} $bg={p.bg}>
            <Avatar $bg={p.av} $fg={p.fg}>{p.id}</Avatar>
            <TileName $long={p.long}>{p.name}<MutedMic /></TileName>
          </Tile>
        ))}
      </Strip>

      <Taskbar>
        <StartButton aria-label="Start"><Icon w={20} h={20} color="none" fill="#000"><path d="M0 3l9-1.300V9.500H0zM10 1.500 20 0v9.500H10zM0 10.500h9v7.800L0 17zM10 10.500h10V20l-10-1.500z" /></Icon></StartButton>
        <SearchBox>
          <Icon w={21} h={21} color="#222" sw={1.500}><circle cx="13.500" cy="7.500" r="6.500" /><path d="M9 12.500 1 20.500" /></Icon>
          <SearchInput aria-label="Search" placeholder="Type here to search" />
        </SearchBox>
        <TaskButton aria-label="Cortana"><Icon w={20} h={20} color="#000" sw={2.800}><circle cx="10" cy="10" r="8" /></Icon></TaskButton>
        <TaskButton aria-label="Task view"><Icon w={21} h={20} color="#000"><path d="M1 0v3.500h12V0M1 20v-3.500h12V20M1 6.500h12v7H1zM18.500 0v5M18.500 11v9" /><path d="M17 6h3v3h-3z" fill="#000" stroke="none" /></Icon></TaskButton>
        <TaskButton aria-label="Edge"><Edge /></TaskButton>
        <TaskButton aria-label="Chrome"><Chrome /></TaskButton>
        <TaskButton aria-label="File Explorer"><Explorer /></TaskButton>
        <TaskButton aria-label="Store"><Store /></TaskButton>
        <TaskButton aria-label="Mail"><Mail /></TaskButton>
        <TaskButton $on aria-label="Teams"><Teams /></TaskButton>
        <StackEdge />
        <Tray>
          <TrayButton $w={30} aria-label="Hidden icons"><Icon w={16} h={9} color="#111" sw={1.300}><path d="M0.500 8.500 8 1l7.500 7.500" /></Icon></TrayButton>
          <TrayButton $w={30} aria-label="Battery"><Icon w={20} h={14} color="#000" sw={1.300}><path d="M6 2.500h12v10H4V8M1 1v3M4 1v3M0.500 4h4.500v2L3 8zM3 8v4" /><path d="M6 5h5v5.500H6zM19 5h1v5h-1z" fill="#000" stroke="none" /></Icon></TrayButton>
          <TrayButton $w={30} aria-label="Volume"><Icon w={21} h={16} color="#000" sw={1.200}><path d="M1 5h3l4-4v14l-4-4H1zM10.500 6c1 1 1 3 0 4M13.500 4c2 2 2 6 0 8" /><path d="M16.500 1.500c4 4 4 9 0 13" stroke="#888" /></Icon></TrayButton>
          <TrayButton $w={34} aria-label="Network"><Icon w={16} h={16} color="#000" sw={1.200}><path d="M1 15C2 7 7 2 15 1M4.500 15C5.500 9 9 6 15 5M8 15c1-3.500 3-5.500 7-6" /><circle cx="13.500" cy="13.500" r="1.500" fill="#000" stroke="none" /></Icon></TrayButton>
          <TrayButton $w={40}>ENG</TrayButton>
          <Clock><span>14:08</span><span>23-10-2020</span></Clock>
          <NoticeButton aria-label="Notifications"><Icon w={21} h={21} color="#000" sw={1.300}><path d="M1 1h19v16h-7l-2.500 3L8 17H1z" /></Icon></NoticeButton>
          <ShowDesktop aria-label="Show desktop" />
        </Tray>
      </Taskbar>
    </Screen>
  );
}
